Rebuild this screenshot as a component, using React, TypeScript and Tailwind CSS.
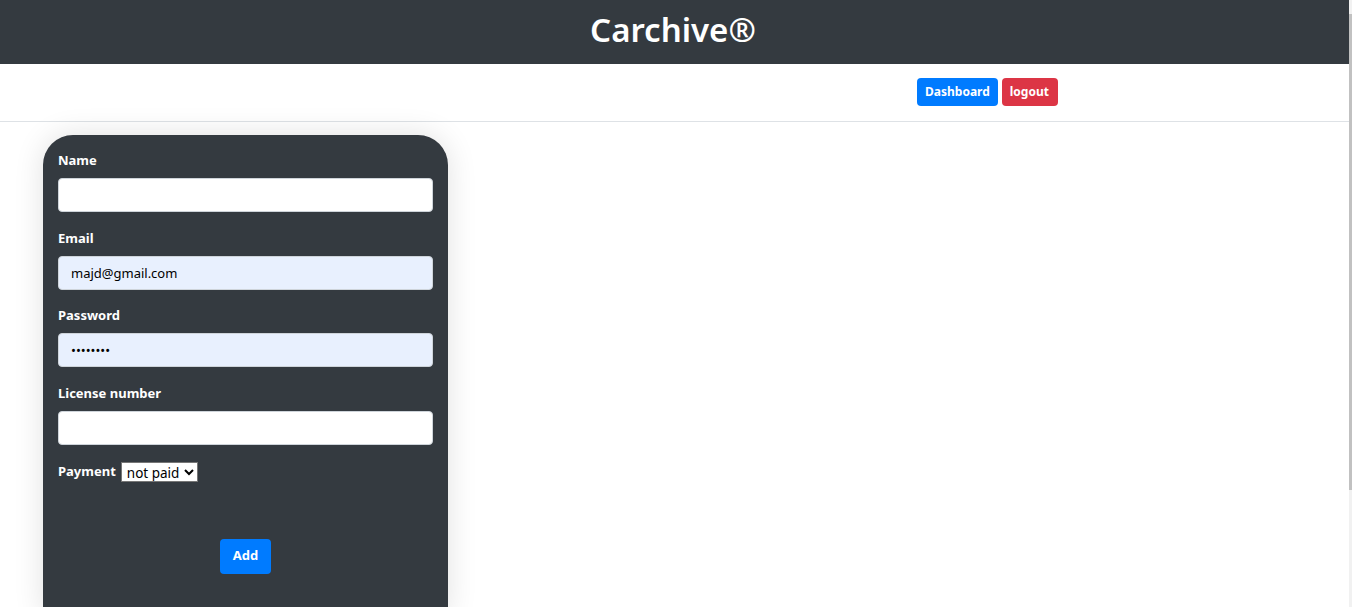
import React from 'react'

const font = { fontFamily: '"Noto Sans", "Open Sans", sans-serif' }

function Field({ label, value, type = 'text', filled = false }: { label: string; value?: string; type?: string; filled?: boolean }) {
  return (
    <div className='mb-[15.5px]'>
      <label className='block text-[13px] font-bold leading-[20px] text-white mb-2'>{label}</label>
      <input
        type={type}
        defaultValue={value}
        className={`block w-full h-[34px] px-3 text-[13px] text-black rounded-[4px] border border-[#ced4da] outline-none ${filled ? 'bg-[#e8f0fe]' : 'bg-white'}`}
      />
    </div>
  )
}

export default function App() {
  return (
    <div className='flex h-[607px] bg-white overflow-hidden' style={font}>
      <div className='flex-1 min-w-0'>
        <header className='h-16 bg-[#343a40] flex items-center justify-center'>
          <h1 className='text-[33px] font-semibold text-white leading-none pb-[6px] pr-[3px]'>Carchive®</h1>
        </header>

        <nav className='h-[58px] border-b border-[#dee2e6] flex items-start pt-[14px] pl-[917px] gap-1'>
          <button className='h-7 px-[8px] rounded-[4px] bg-[#007bff] text-white text-[12px] font-bold'>Dashboard</button>
          <button className='h-7 pl-[8px] pr-[9px] rounded-[4px] bg-[#dc3545] text-white text-[12px] font-bold'>logout</button>
        </nav>

        <main className='pt-[13px] pl-[43px]'>
          <div className='w-[405px] h-[480px] bg-[#343a40] rounded-t-[30px] px-[15px] pt-[15px] shadow-[0_0_30px_rgba(0,0,0,0.12)]'>
            <Field label='Name' />
            <Field label='Email' value='majd@gmail.com' filled />
            <Field label='Password' type='password' value='majdmajd' filled />
            <Field label='License number' />
            <div className='flex items-center gap-[5px] mt-[17px]'>
              <span className='text-[13px] font-bold text-white'>Payment</span>
              <select className='h-5 bg-white text-black text-[13.5px] border border-[#767676] px-[1px]' defaultValue='not paid'>
                <option>not paid</option>
                <option>paid</option>
              </select>
            </div>
            <div className='flex justify-center mt-[57px]'>
              <button className='w-[51px] h-[35px] rounded-[4px] bg-[#007bff] text-white text-[13px] font-bold'>Add</button>
            </div>
          </div>
        </main>
      </div>
      <div className='w-[3px] bg-[#f1f1f1] pt-[14px] pb-[117px] flex'>
        <div className='flex-1 bg-[#c1c1c1]' />
      </div>
    </div>
  )
}
